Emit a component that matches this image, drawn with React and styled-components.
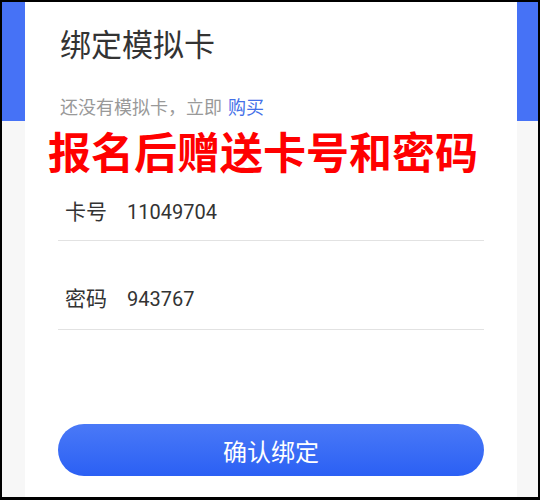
import styled, { createGlobalStyle } from "styled-components";

const GlobalStyle = createGlobalStyle`
  html, body {
    margin: 0;
    padding: 0;
    background: #000;
  }
  * {
    box-sizing: border-box;
  }
`;

const Frame = styled.div`
  width: 540px;
  height: 500px;
  border: 2px solid #000;
  border-bottom-width: 3px;
  background: linear-gradient(#4672f6 0 119px, #f7f7f7 119px);
  padding: 0 21px 0 23px;
  display: flex;
  font-family: Roboto, "Noto Sans CJK SC", sans-serif;
`;

const Card = styled.section`
  flex: 1;
  background: #fff;
  padding: 25px 33px 0;
  display: flex;
  flex-direction: column;
`;

const Title = styled.h1`
  margin: 0 0 0 2px;
  font-size: 31px;
  line-height: 38px;
  font-weight: 400;
  color: #333;
`;

const Hint = styled.p`
  margin: 30px 0 0 2px;
  font-size: 18px;
  line-height: 26px;
  color: #999;
`;

const BuyLink = styled.a`
  color: #4470e8;
  margin-left: 6px;
  text-decoration: none;
`;

const Promo = styled.div`
  margin: 8px 0 0 -10px;
  font-size: 43px;
  line-height: 50px;
  font-weight: 700;
  color: #f00;
  white-space: nowrap;
`;

const Field = styled.div`
  display: flex;
  align-items: center;
  gap: 20px;
  padding: ${(p) => p.$top}px 7px ${(p) => p.$bottom}px;
  border-bottom: 1px solid #e2e2e2;
  line-height: 30px;
  color: #333;
`;

const Label = styled.span`
  font-size: 21px;
`;

const Value = styled.span`
  font-size: 20px;
`;

const ConfirmButton = styled.button`
  margin-top: 94px;
  height: 52px;
  border: none;
  border-radius: 26px;
  background: linear-gradient(#4a79f7, #2b60f4);
  color: #fff;
  font-family: inherit;
  font-size: 24px;
  cursor: pointer;
`;

export default function App() {
  return (
    <>
      <GlobalStyle />
      <Frame>
        <Card>
          <Title>绑定模拟卡</Title>
          <Hint>
            还没有模拟卡，立即<BuyLink href="#">购买</BuyLink>
          </Hint>
          <Promo>报名后赠送卡号和密码</Promo>
          <Field $top={18} $bottom={13}>
            <Label>卡号</Label>
            <Value>11049704</Value>
          </Field>
          <Field $top={43} $bottom={15}>
            <Label>密码</Label>
            <Value>943767</Value>
          </Field>
          <ConfirmButton>确认绑定</ConfirmButton>
        </Card>
      </Frame>
    </>
  );
}
